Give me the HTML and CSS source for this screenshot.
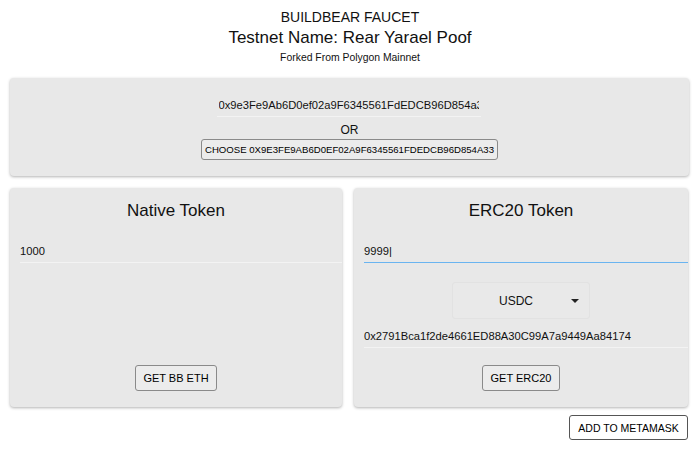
FILE: index.html
```html
<!DOCTYPE html>
<html lang="en">
<head>
    <meta charset="UTF-8">
    <meta name="viewport" content="width=device-width, initial-scale=1.0">
    <title>BuildBear Faucet</title>
    <link rel="stylesheet" href="styles.css">
</head>
<body>
    <header class="header">
        <div class="brand">BUILDBEAR FAUCET</div>
        <h1 class="title">Testnet Name: Rear Yarael Poof</h1>
        <div class="subtitle">Forked From Polygon Mainnet</div>
    </header>

    <!-- Wallet address -->
    <section class="card wallet-card">
        <input class="field wallet-field" type="text" value="0x9e3Fe9Ab6D0ef02a9F6345561FdEDCB96D854a33">
        <div class="or">OR</div>
        <button class="btn btn-choose">CHOOSE 0X9E3FE9AB6D0EF02A9F6345561FDEDCB96D854A33</button>
    </section>

    <div class="token-grid">
        <!-- Native token -->
        <section class="card token-card">
            <h2 class="card-title">Native Token</h2>
            <input class="field amount-field" type="text" value="1000">
            <button class="btn btn-bottom btn-eth">GET BB ETH</button>
        </section>

        <!-- ERC20 token -->
        <section class="card token-card">
            <h2 class="card-title">ERC20 Token</h2>
            <input class="field amount-field focused" type="text" value="9999|">
            <div class="select">
                <span>USDC</span>
                <span class="caret"></span>
            </div>
            <input class="field amount-field address-field" type="text" value="0x2791Bca1f2de4661ED88A30C99A7a9449Aa84174">
            <button class="btn btn-bottom btn-erc">GET ERC20</button>
        </section>
    </div>

    <div class="footer">
        <button class="btn btn-metamask">ADD TO METAMASK</button>
    </div>
</body>
</html>
```

FILE: styles.css
```css
body {
    font-family: "Liberation Sans", Arial, sans-serif;
    margin: 0;
    padding: 0;
    background-color: #fff;
    color: #111;
}

.header {
    text-align: center;
    padding-top: 9px;
}

.brand {
    font-size: 14px;
    line-height: 16px;
}

.title {
    font-size: 17px;
    font-weight: normal;
    line-height: 22px;
    margin: 2px 0 0;
}

.subtitle {
    font-size: 10.4px;
    line-height: 13px;
    margin-top: 2px;
}

.card {
    background: #e8e8e8;
    border-radius: 4px;
    box-shadow: 0 1px 3px rgba(0, 0, 0, 0.3);
}

.wallet-card {
    margin: 14px 11px 0 10px;
    padding: 15px 0 16px;
    display: flex;
    flex-direction: column;
    align-items: center;
}

.field {
    font-family: inherit;
    font-size: 11.2px;
    color: #111;
    background: transparent;
    border: none;
    border-bottom: 1px solid #f3f3f3;
    outline: none;
    height: 24px;
    padding: 0;
    box-sizing: border-box;
}

.wallet-field {
    width: 264px;
    padding: 0 2px;
    margin-left: -2px;
}

.or {
    font-size: 12px;
    line-height: 14px;
    margin-top: 6px;
}

.btn {
    font-family: inherit;
    color: #000;
    background: #ececec;
    border: 1px solid #8a8a8a;
    border-radius: 3px;
    cursor: pointer;
}

.btn-choose {
    font-size: 9.6px;
    height: 21px;
    width: 297px;
    padding: 0;
    margin-top: 2px;
}

.token-grid {
    display: grid;
    grid-template-columns: 332px 334px;
    gap: 12px;
    margin: 12px 0 0 10px;
}

.token-card {
    height: 219px;
    padding: 12px 0 16px;
    box-sizing: border-box;
    display: flex;
    flex-direction: column;
    align-items: center;
}

.card-title {
    font-size: 17px;
    font-weight: normal;
    line-height: 22px;
    margin: 0;
}

.amount-field {
    align-self: stretch;
    margin: 17px 0 0 10px;
}

.focused {
    border-bottom-color: #6ab4f0;
}

.select {
    width: 138px;
    height: 37px;
    box-sizing: border-box;
    margin-top: 19px;
    border: 1px solid #e2e2e2;
    border-radius: 3px;
    background: #e9e9e9;
    display: flex;
    align-items: center;
    font-size: 12px;
    padding: 0 10px 0 46px;
}

.select span:first-child {
    flex: 1;
}

.caret {
    width: 0;
    height: 0;
    border-left: 4px solid transparent;
    border-right: 4px solid transparent;
    border-top: 4px solid #222;
}

.address-field {
    margin-top: 5px;
}

.btn-bottom {
    margin-top: auto;
    font-size: 11px;
    height: 26px;
    padding: 0;
}

.btn-eth {
    width: 82px;
}

.btn-erc {
    width: 78px;
}

.token-card .address-field + .btn-bottom {
    margin-top: 17px;
}

.footer {
    display: flex;
    justify-content: flex-end;
    padding: 8px 12px 0 0;
}

.btn-metamask {
    background: #fff;
    border-color: #555;
    font-size: 10.5px;
    height: 25px;
    width: 119px;
    padding: 0;
}
```
